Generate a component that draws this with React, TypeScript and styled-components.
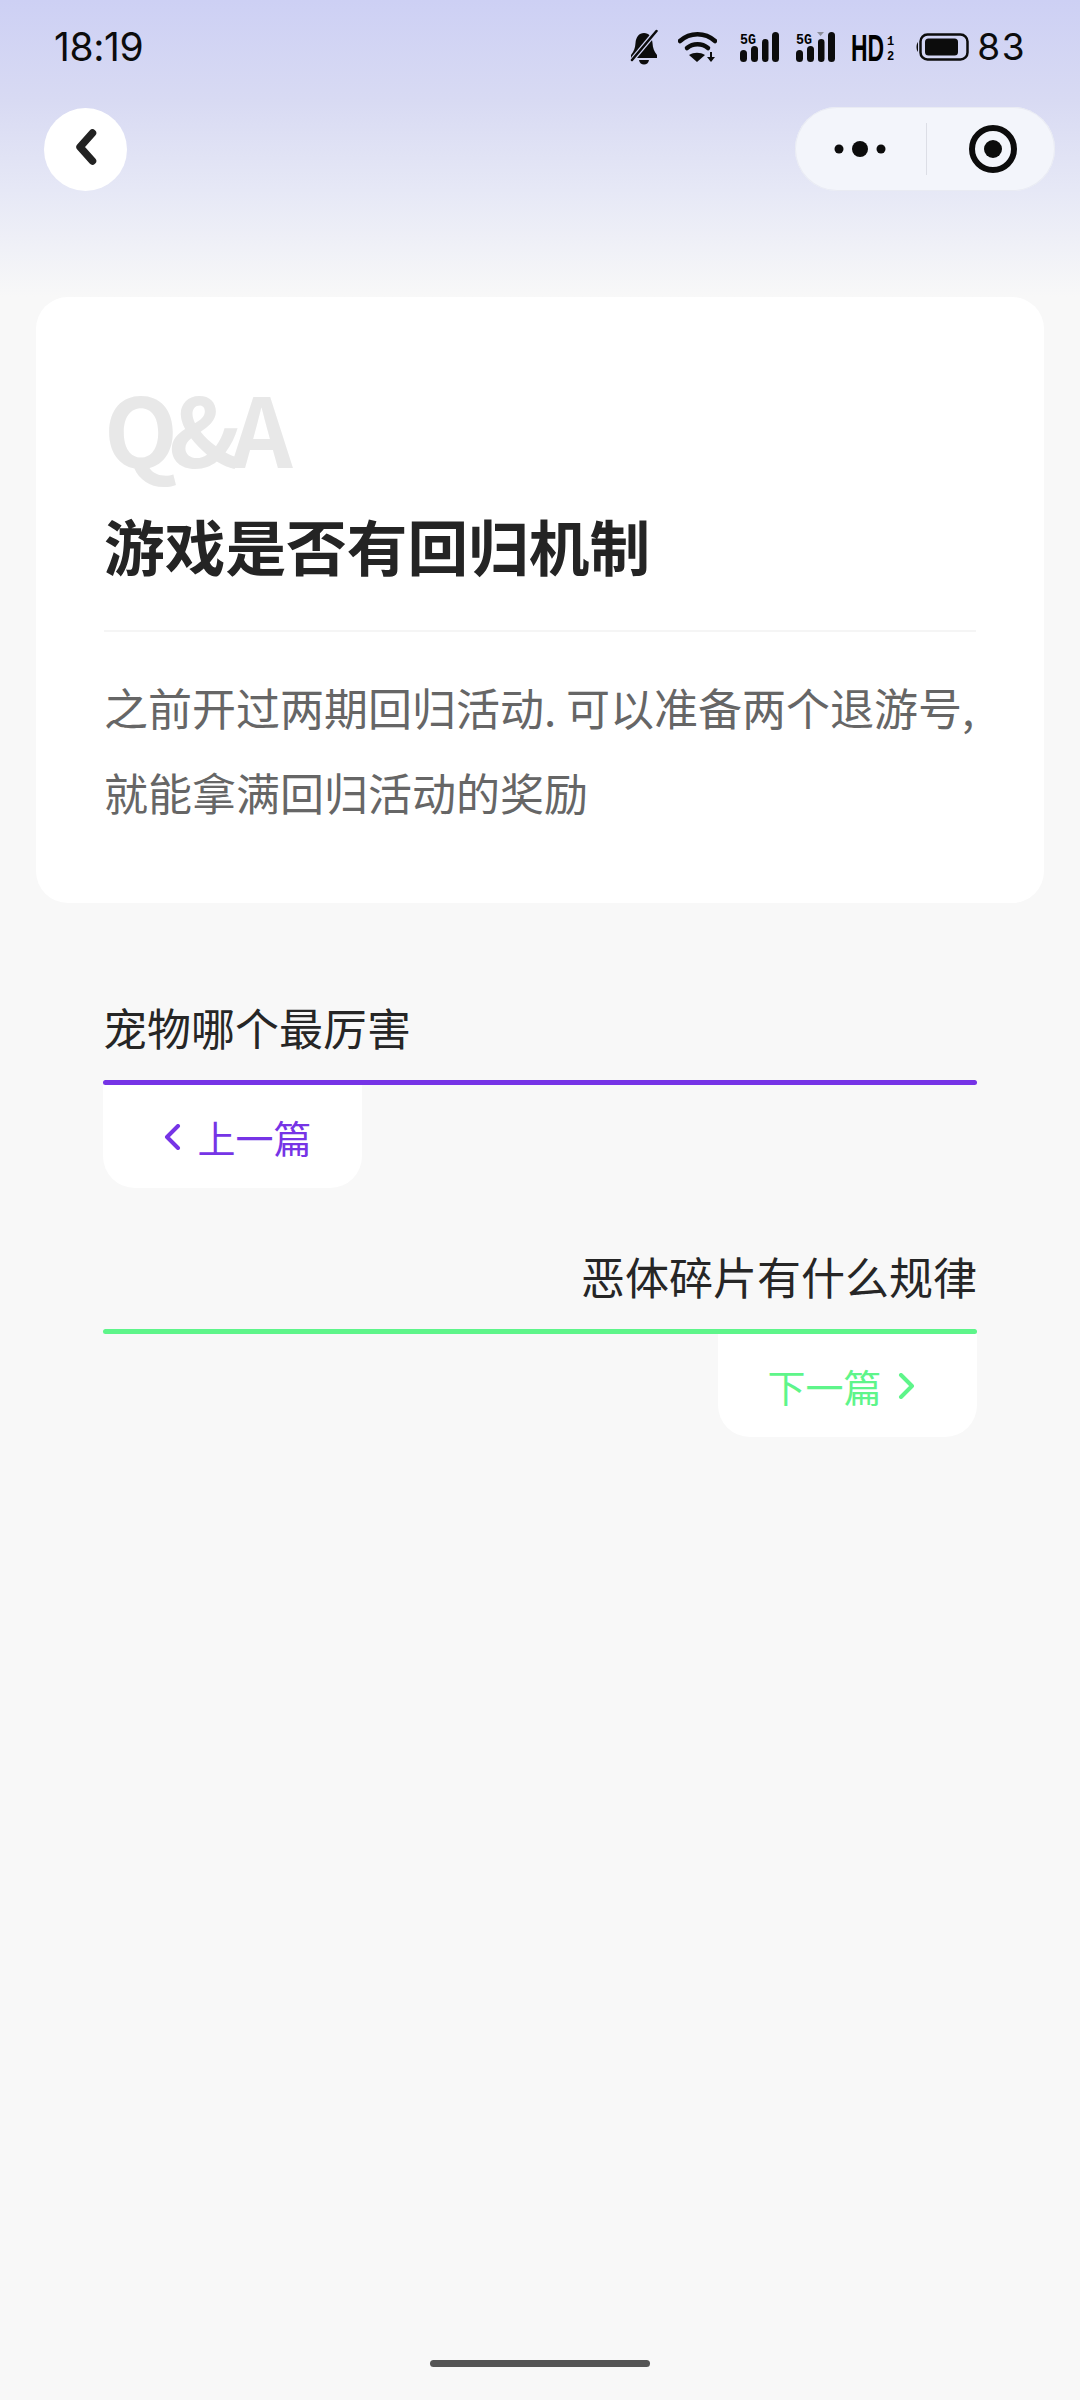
import React from 'react';
import styled, { createGlobalStyle } from 'styled-components';

const GlobalStyle = createGlobalStyle`
  html, body {
    margin: 0;
    padding: 0;
    background: #f8f8f8;
  }
  * {
    box-sizing: border-box;
  }
`;

const CJK = `"Noto Sans CJK SC", "Noto Sans", sans-serif`;

const Page = styled.div`
  width: 1080px;
  height: 2400px;
  display: flex;
  flex-direction: column;
  overflow: hidden;
  font-family: ${CJK};
  background: linear-gradient(180deg, #cdd0f4 0px, #d8daf3 100px, #e6e8f6 190px, #f8f8f8 297px, #f8f8f8 100%);
`;

const StatusBar = styled.div`
  height: 94px;
  flex: none;
  padding: 0 54px 0 54px;
  display: flex;
  align-items: center;
  justify-content: space-between;
  color: #0c0c0c;
`;

const Time = styled.span`
  font-family: Inter, sans-serif;
  font-size: 39px;
  line-height: 44px;
  letter-spacing: -0.4px;
`;

const StatusIcons = styled.div`
  display: flex;
  align-items: center;
  height: 44px;
`;

const StatusIcon = styled.svg<{ $gap: number }>`
  display: block;
  flex: none;
  margin-left: ${p => p.$gap}px;
`;

const BatteryLevel = styled.span`
  font-family: Inter, sans-serif;
  font-size: 37px;
  line-height: 44px;
  letter-spacing: 1.5px;
  margin-left: 8px;
`;

const NavBar = styled.div`
  height: 84px;
  flex: none;
  margin-top: 13px;
  padding: 0 25px 0 44px;
  display: flex;
  align-items: center;
  justify-content: space-between;
`;

const BackButton = styled.div`
  width: 83px;
  height: 83px;
  border-radius: 50%;
  background: #fff;
  display: flex;
  align-items: center;
  justify-content: center;
`;

const Capsule = styled.div`
  width: 260px;
  height: 84px;
  border-radius: 42px;
  background: #f3f5fb;
  box-shadow: inset 0 0 0 1px #e9ebf3;
  display: flex;
  align-items: center;
`;

const CapsuleCell = styled.div<{ $width: number; $shift?: number }>`
  flex: 0 0 ${p => p.$width}px;
  display: flex;
  align-items: center;
  justify-content: center;
  padding-left: ${p => p.$shift ?? 0}px;
`;

const CapsuleDivider = styled.div`
  width: 1px;
  height: 52px;
  background: #dcdee6;
`;

const Card = styled.section`
  flex: none;
  width: 1008px;
  height: 606px;
  margin: 106px 0 0 36px;
  padding: 80px 68px 0;
  background: #fff;
  border-radius: 32px;
`;

const Watermark = styled.div`
  font-family: ${CJK};
  font-size: 96px;
  font-weight: 700;
  line-height: 100px;
  letter-spacing: -9px;
  color: #e8e8e8;
`;

const Title = styled.h1`
  margin: 26px 0 0;
  font-size: 60.7px;
  font-weight: 700;
  line-height: 84px;
  color: #242424;
`;

const Divider = styled.div`
  height: 2px;
  margin-top: 43px;
  background: #f5f5f5;
`;

const Answer = styled.p`
  margin: 33px 0 0;
  font-size: 44px;
  line-height: 85px;
  color: #666;
  white-space: nowrap;
`;

const Links = styled.nav`
  flex: none;
  margin-top: 92px;
  padding: 0 103px;
  display: flex;
  flex-direction: column;
  gap: 56px;
`;

const LinkBlock = styled.div<{ $next?: boolean }>`
  display: flex;
  flex-direction: column;
  align-items: ${p => (p.$next ? 'flex-end' : 'flex-start')};
`;

const LinkTitle = styled.div`
  font-size: 44px;
  line-height: 64px;
  color: #262626;
`;

const Rule = styled.div<{ $color: string }>`
  width: 100%;
  height: 5px;
  margin-top: 21px;
  border-radius: 3px;
  background: ${p => p.$color};
`;

const LinkButton = styled.div<{ $color: string; $next?: boolean }>`
  width: 259px;
  height: 103px;
  background: #fff;
  border-radius: 0 0 32px 32px;
  color: ${p => p.$color};
  font-size: 38px;
  line-height: 46px;
  display: flex;
  align-items: center;
  justify-content: center;
  gap: 16px;
  padding: ${p => (p.$next ? '0 12px 0 0' : '0 0 0 10px')};
`;

const HomeIndicator = styled.div`
  flex: none;
  width: 220px;
  height: 7px;
  margin: auto auto 33px;
  border-radius: 4px;
  background: #555;
`;

const SignalIcon: React.FC<{ $gap: number; roaming?: boolean }> = ({ $gap, roaming }) => (
  <StatusIcon $gap={$gap} width="39" height="32" viewBox="0 0 39 32">
    <text x="0" y="13" fontFamily="'Liberation Mono', monospace" fontWeight="700" fontSize="15" textLength="16" lengthAdjust="spacingAndGlyphs">5G</text>
    {roaming && <path d="M21 1h7l-3.500 4z" fill="#8b8d99" />}
    <rect x="0" y="19" width="7" height="12" rx="3.500" fill="#0c0c0c" />
    <rect x="11" y="15" width="7" height="16" rx="3.500" fill="#0c0c0c" />
    <rect x="22" y="8" width="6.500" height="23" rx="3.200" fill="#0c0c0c" />
    <rect x="32" y="1" width="7" height="30" rx="3.500" fill="#0c0c0c" />
  </StatusIcon>
);

const Chevron: React.FC<{ color: string; flip?: boolean }> = ({ color, flip }) => (
  <svg width="18" height="26" viewBox="0 0 18 26">
    <path
      d={flip ? 'M3 2l11 11L3 24' : 'M15 2L4 13l11 11'}
      fill="none"
      stroke={color}
      strokeWidth="4"
      strokeLinecap="round"
      strokeLinejoin="round"
    />
  </svg>
);

export default function App() {
  return (
    <Page>
      <GlobalStyle />
      <StatusBar>
        <Time>18:19</Time>
        <StatusIcons>
          <StatusIcon $gap={0} width="28" height="36" viewBox="0 0 28 36">
            <path d="M14 4c-5 0-8 4-8.500 10-.3 5-1.500 8-4.500 12v3h26v-3c-3-4-4.200-7-4.500-12C22 8 19 4 14 4z" fill="#0c0c0c" />
            <path d="M9 31h10c-.5 3-2.500 4.500-5 4.500S9.500 34 9 31z" fill="#0c0c0c" />
            <path d="M28 0 3 30" stroke="#d0d3f4" strokeWidth="5" />
            <path d="M26.500 2 2 31" stroke="#0c0c0c" strokeWidth="2.500" strokeLinecap="round" />
          </StatusIcon>
          <StatusIcon $gap={20} width="39" height="32" viewBox="0 0 39 32">
            <path d="M2 10c10-9 25-9 35 0" fill="none" stroke="#0c0c0c" strokeWidth="4.500" strokeLinecap="round" />
            <path d="M9 17c6-5 15-5 21 0" fill="none" stroke="#0c0c0c" strokeWidth="4.500" strokeLinecap="round" />
            <path d="M11 24c5-3 11-3 16 0l-8 7z" fill="#0c0c0c" />
            <path d="M33 21v7" stroke="#0c0c0c" strokeWidth="2" />
            <path d="M29 26h8l-4 5z" fill="#0c0c0c" />
          </StatusIcon>
          <SignalIcon $gap={23} />
          <SignalIcon $gap={17} roaming />
          <StatusIcon $gap={16} width="45" height="44" viewBox="0 0 45 44">
            <g transform="scale(0.62 1)">
              <text x="0" y="36" fontFamily="'Liberation Sans', sans-serif" fontWeight="700" fontSize="37">HD</text>
            </g>
            <text x="36" y="20" fontFamily="'Liberation Mono', monospace" fontWeight="700" fontSize="12">1</text>
            <text x="36" y="35" fontFamily="'Liberation Mono', monospace" fontWeight="700" fontSize="12">2</text>
          </StatusIcon>
          <StatusIcon $gap={19} width="54" height="28" viewBox="0 0 54 28">
            <path d="M3 9C1 11 1 17 3 19z" fill="#0c0c0c" />
            <rect x="5.500" y="1.500" width="47" height="25" rx="7" fill="none" stroke="#0c0c0c" strokeWidth="2.500" />
            <rect x="10" y="5.500" width="33" height="17" rx="3.500" fill="#0c0c0c" />
          </StatusIcon>
          <BatteryLevel>83</BatteryLevel>
        </StatusIcons>
      </StatusBar>

      <NavBar>
        <BackButton>
          <svg width="24" height="42" viewBox="0 0 24 42">
            <path d="M18.500 5 6 19 18.500 33" fill="none" stroke="#222" strokeWidth="7.500" strokeLinecap="round" strokeLinejoin="round" />
          </svg>
        </BackButton>
        <Capsule>
          <CapsuleCell $width={131}>
            <svg width="54" height="24" viewBox="0 0 54 24">
              <circle cx="5" cy="12" r="4.500" fill="#0c0c0c" />
              <circle cx="26" cy="12" r="8" fill="#0c0c0c" />
              <circle cx="47" cy="12" r="4.500" fill="#0c0c0c" />
            </svg>
          </CapsuleCell>
          <CapsuleDivider />
          <CapsuleCell $width={128} $shift={4}>
            <svg width="50" height="50" viewBox="0 0 50 50">
              <circle cx="25" cy="25" r="21" fill="none" stroke="#0c0c0c" strokeWidth="6" />
              <circle cx="25" cy="25" r="9" fill="#0c0c0c" />
            </svg>
          </CapsuleCell>
        </Capsule>
      </NavBar>

      <Card>
        <Watermark>Q&amp;A</Watermark>
        <Title>游戏是否有回归机制</Title>
        <Divider />
        <Answer>
          之前开过两期回归活动. 可以准备两个退游号,
          <br />
          就能拿满回归活动的奖励
        </Answer>
      </Card>

      <Links>
        <LinkBlock>
          <LinkTitle>宠物哪个最厉害</LinkTitle>
          <Rule $color="#7634e6" />
          <LinkButton $color="#7634e6">
            <Chevron color="#7634e6" />
            上一篇
          </LinkButton>
        </LinkBlock>
        <LinkBlock $next>
          <LinkTitle>恶体碎片有什么规律</LinkTitle>
          <Rule $color="#5ef58a" />
          <LinkButton $color="#5ef58a" $next>
            下一篇
            <Chevron color="#5ef58a" flip />
          </LinkButton>
        </LinkBlock>
      </Links>

      <HomeIndicator />
    </Page>
  );
}
